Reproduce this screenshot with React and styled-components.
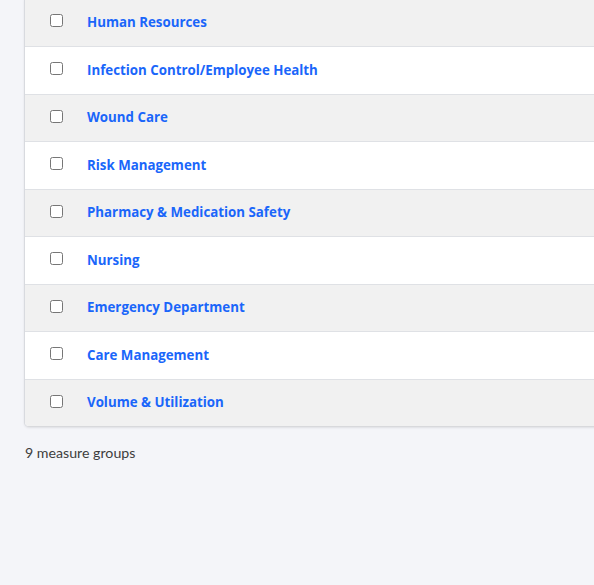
import React from "react";
import styled, { createGlobalStyle } from "styled-components";

const Global = createGlobalStyle`
  html, body { margin: 0; padding: 0; background: #f4f5f9; }
  body { font-family: "Lato", "Liberation Sans", sans-serif; }
`;

const Page = styled.div`
  padding: 0 0 0 25px;
  margin-top: -1.5px;
  min-height: 590px;
`;

const Card = styled.div`
  background: #fff;
  border-radius: 0 0 4px 4px;
  box-shadow: -1px 0 0 #d8dadf, 0 1px 3px rgba(0, 0, 0, 0.18);
  margin-right: -10px;
  overflow: hidden;
`;

const Row = styled.div`
  display: flex;
  align-items: center;
  height: 47.5px;
  box-sizing: border-box;
  background: ${(p) => (p.$alt ? "#f1f1f1" : "#ffffff")};
  border-top: ${(p) => (p.$first ? "none" : "1px solid #dfe1e5")};
`;

const CheckCell = styled.div`
  width: 62px;
  padding-left: 25px;
  box-sizing: border-box;
  display: flex;
  align-items: center;
  margin-top: -3px;
`;

const Check = styled.input`
  margin: 0;
  width: 13px;
  height: 13px;
`;

const Name = styled.a`
  color: #1a66fa;
  font-family: "Open Sans", "Lato", sans-serif;
  font-weight: 700;
  font-size: 13.3px;
  text-decoration: none;
  margin-top: -1px;
`;

const Footer = styled.div`
  margin-top: 18px;
  font-size: 14.2px;
  color: #3d3d3d;
`;

const groups = [
  "Human Resources",
  "Infection Control/Employee Health",
  "Wound Care",
  "Risk Management",
  "Pharmacy & Medication Safety",
  "Nursing",
  "Emergency Department",
  "Care Management",
  "Volume & Utilization",
];

export default function App() {
  return (
    <>
      <Global />
      <Page>
        <Card>
          {groups.map((g, i) => (
            <Row key={g} $alt={i % 2 === 0} $first={i === 0}>
              <CheckCell>
                <Check type="checkbox" />
              </CheckCell>
              <Name href="#">{g}</Name>
            </Row>
          ))}
        </Card>
        <Footer>9 measure groups</Footer>
      </Page>
    </>
  );
}
